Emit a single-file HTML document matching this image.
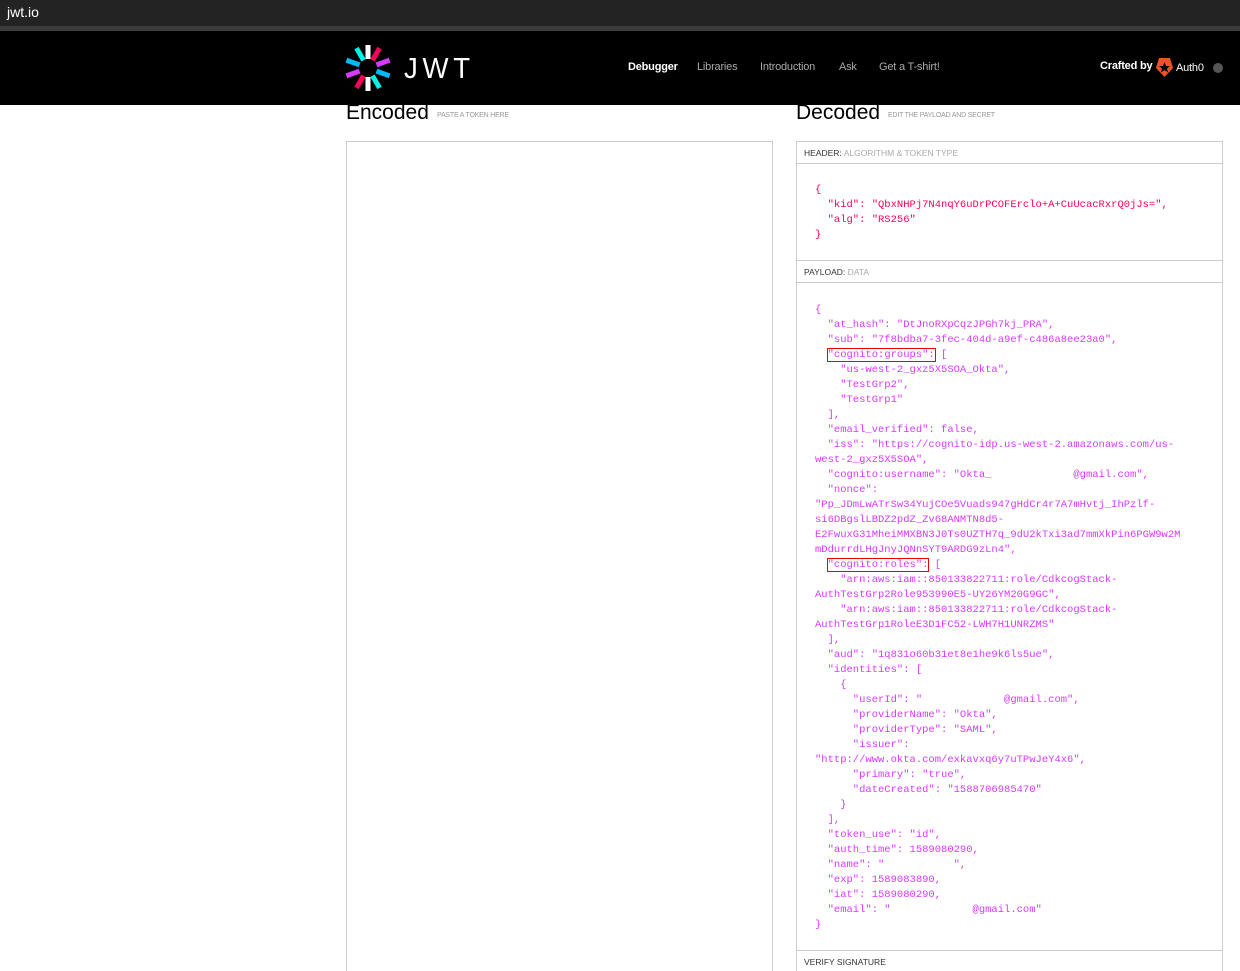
<!DOCTYPE html>
<html><head><meta charset="utf-8"><style>
*{margin:0;padding:0;box-sizing:border-box}
html,body{width:1240px;height:971px;overflow:hidden}
body{background:#fff;font-family:"Liberation Sans",sans-serif;position:relative}
.tab{position:absolute;left:0;top:0;width:1240px;height:26px;background:#232323;color:#fff;font-size:14px;padding:4px 7px}
.strip{position:absolute;left:0;top:26px;width:1240px;height:5px;background:#3c3c3c}
.nav{position:absolute;left:0;top:31px;width:1240px;height:74px;background:#000;z-index:5}
.nav a{position:absolute;top:30px;font-size:11px;color:#a8a8a8;letter-spacing:-0.2px}
.h{position:absolute;font-size:21px;color:#000;top:101px}
.sub{position:absolute;font-size:7px;color:#999;top:112px;letter-spacing:-0.2px}
.panel{position:absolute;border:1px solid #ccc;border-bottom:none}
.bar{position:absolute;left:796px;width:427px;height:23px;border:1px solid #ccc;font-size:8.5px;color:#333;padding:6px 7px;background:#fff}
.bar span{color:#aaa}
pre{position:absolute;left:815px;font-family:"Liberation Mono",monospace;font-size:10.5px;line-height:15px;white-space:pre}
.box{border:1px solid #e00;margin:-1px}
</style></head><body>
<div class="tab">jwt.io</div>
<div class="strip"></div>
<div class="nav">
<svg style="position:absolute;left:345px;top:14px" width="46" height="46" viewBox="-23 -23 46 46">
<rect x="-2.5" y="-23" width="5" height="14" fill="#fff"/>
<rect x="-2.5" y="9" width="5" height="14" fill="#fff"/>
<rect x="-2.5" y="-23" width="5" height="14" fill="#00f2e6" transform="rotate(-30)"/>
<rect x="-2.5" y="-23" width="5" height="14" fill="#fb015b" transform="rotate(30)"/>
<rect x="-2.5" y="-23" width="5" height="14" fill="#d63aff" transform="rotate(70)"/>
<rect x="-2.5" y="-23" width="5" height="14" fill="#00b9f1" transform="rotate(110)"/>
<rect x="-2.5" y="-23" width="5" height="14" fill="#00f2e6" transform="rotate(150)"/>
<rect x="-2.5" y="-23" width="5" height="14" fill="#fb015b" transform="rotate(210)"/>
<rect x="-2.5" y="-23" width="5" height="14" fill="#d63aff" transform="rotate(250)"/>
<rect x="-2.5" y="-23" width="5" height="14" fill="#00b9f1" transform="rotate(290)"/>
</svg>
<div style="position:absolute;left:404px;top:22px;color:#fff;font-size:29px;letter-spacing:5px;transform:scaleX(0.95);transform-origin:left">JWT</div>
<a style="left:628px;color:#fff;font-weight:bold">Debugger</a>
<a style="left:697px">Libraries</a>
<a style="left:760px">Introduction</a>
<a style="left:839px">Ask</a>
<a style="left:879px">Get a T-shirt!</a>
<a style="left:1100px;color:#fff;font-weight:bold;top:29px">Crafted by</a>
<svg style="position:absolute;left:1156px;top:27px" width="17" height="19" viewBox="0 0 17 19"><path d="M3 0H14L17 10L8.5 19L0 10Z" fill="#eb5424"/><path d="M8.5 4L10 8H14L11 10.5L12 14.5L8.5 12L5 14.5L6 10.5L3 8H7Z" fill="#000"/></svg>
<a style="left:1176px;color:#fff;top:31px">Auth0</a>
<div style="position:absolute;left:1213px;top:32px;width:10px;height:10px;border-radius:50%;background:#555"></div>
</div>
<div class="h" style="left:346px">Encoded</div><div class="sub" style="left:437px">PASTE A TOKEN HERE</div>
<div class="h" style="left:796px">Decoded</div><div class="sub" style="left:888px">EDIT THE PAYLOAD AND SECRET</div>
<div class="panel" style="left:346px;top:141px;width:427px;height:830px"></div>
<div class="panel" style="left:796px;top:141px;width:427px;height:830px"></div>
<div class="bar" style="top:141px">HEADER: <span>ALGORITHM &amp; TOKEN TYPE</span></div>
<pre style="top:183px;color:#fb015b">{
  "kid": "QbxNHPj7N4nqY6uDrPCOFErclo+A+CuUcacRxrQ0jJs=",
  "alg": "RS256"
}</pre>
<div class="bar" style="top:260px">PAYLOAD: <span>DATA</span></div>
<pre style="top:303px;color:#d63aff">{
  "at_hash": "DtJnoRXpCqzJPGh7kj_PRA",
  "sub": "7f8bdba7-3fec-404d-a9ef-c486a8ee23a0",
  <span class="box">"cognito:groups":</span> [
    "us-west-2_gxz5X5SOA_Okta",
    "TestGrp2",
    "TestGrp1"
  ],
  "email_verified": false,
  "iss": "https://cognito-idp.us-west-2.amazonaws.com/us-
west-2_gxz5X5SOA",
  "cognito:username": "Okta_             @gmail.com",
  "nonce":
"Pp_JDmLwATrSw34YujCOe5Vuads947gHdCr4r7A7mHvtj_IhPzlf-
si6DBgslLBDZ2pdZ_Zv68ANMTN8d5-
E2FwuxG31MheiMMXBN3J0Ts0UZTH7q_9dU2kTxi3ad7mmXkPin6PGW9w2M
mDdurrdLHgJnyJQNnSYT9ARDG9zLn4",
  <span class="box">"cognito:roles":</span> [
    "arn:aws:iam::850133822711:role/CdkcogStack-
AuthTestGrp2Role953990E5-UY26YM20G9GC",
    "arn:aws:iam::850133822711:role/CdkcogStack-
AuthTestGrp1RoleE3D1FC52-LWH7H1UNRZMS"
  ],
  "aud": "1q831o60b31et8e1he9k6ls5ue",
  "identities": [
    {
      "userId": "             @gmail.com",
      "providerName": "Okta",
      "providerType": "SAML",
      "issuer":
"http://www.okta.com/exkavxq6y7uTPwJeY4x6",
      "primary": "true",
      "dateCreated": "1588706985470"
    }
  ],
  "token_use": "id",
  "auth_time": 1589080290,
  "name": "           ",
  "exp": 1589083890,
  "iat": 1589080290,
  "email": "             @gmail.com"
}</pre>
<div class="bar" style="top:950px;height:21px;border-bottom:none;color:#333">VERIFY SIGNATURE</div>
</body></html>
